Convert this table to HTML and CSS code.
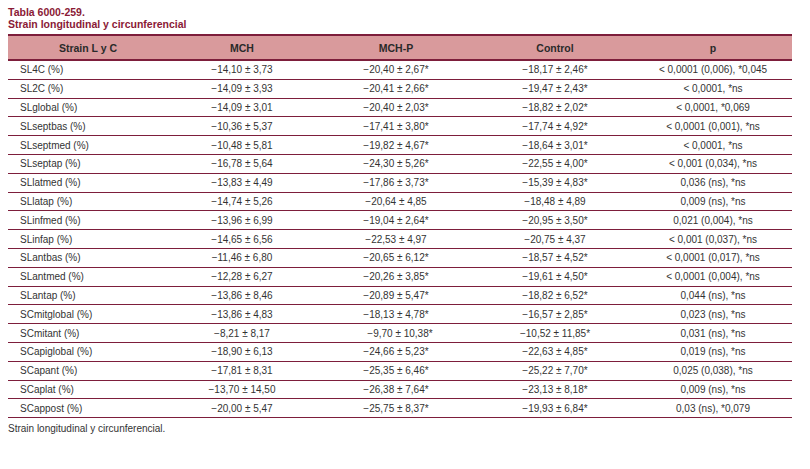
FILE: index.html
```html
<!DOCTYPE html>
<html lang="es">
<head>
<meta charset="utf-8">
<title>Tabla 6000-259</title>
<link rel="stylesheet" href="styles.css">
</head>
<body>
<div class="page">
  <div class="caption">
    <div>Tabla 6000-259.</div>
    <div>Strain longitudinal y circunferencial</div>
  </div>
  <table class="data">
    <colgroup>
      <col class="c1"><col class="c2"><col class="c3"><col class="c4"><col class="c5">
    </colgroup>
    <thead>
      <tr><th>Strain L y C</th><th>MCH</th><th>MCH-P</th><th>Control</th><th>p</th></tr>
    </thead>
    <tbody>
      <tr><td class="name">SL4C (%)</td><td>−14,10 ± 3,73</td><td>−20,40 ± 2,67*</td><td>−18,17 ± 2,46*</td><td>&lt; 0,0001 (0,006), *0,045</td></tr>
      <tr><td class="name">SL2C (%)</td><td>−14,09 ± 3,93</td><td>−20,41 ± 2,66*</td><td>−19,47 ± 2,43*</td><td>&lt; 0,0001, *ns</td></tr>
      <tr><td class="name">SLglobal (%)</td><td>−14,09 ± 3,01</td><td>−20,40 ± 2,03*</td><td>−18,82 ± 2,02*</td><td>&lt; 0,0001, *0,069</td></tr>
      <tr><td class="name">SLseptbas (%)</td><td>−10,36 ± 5,37</td><td>−17,41 ± 3,80*</td><td>−17,74 ± 4,92*</td><td>&lt; 0,0001 (0,001), *ns</td></tr>
      <tr><td class="name">SLseptmed (%)</td><td>−10,48 ± 5,81</td><td>−19,82 ± 4,67*</td><td>−18,64 ± 3,01*</td><td>&lt; 0,0001, *ns</td></tr>
      <tr><td class="name">SLseptap (%)</td><td>−16,78 ± 5,64</td><td>−24,30 ± 5,26*</td><td>−22,55 ± 4,00*</td><td>&lt; 0,001 (0,034), *ns</td></tr>
      <tr><td class="name">SLlatmed (%)</td><td>−13,83 ± 4,49</td><td>−17,86 ± 3,73*</td><td>−15,39 ± 4,83*</td><td>0,036 (ns), *ns</td></tr>
      <tr><td class="name">SLlatap (%)</td><td>−14,74 ± 5,26</td><td>−20,64 ± 4,85</td><td>−18,48 ± 4,89</td><td>0,009 (ns), *ns</td></tr>
      <tr><td class="name">SLinfmed (%)</td><td>−13,96 ± 6,99</td><td>−19,04 ± 2,64*</td><td>−20,95 ± 3,50*</td><td>0,021 (0,004), *ns</td></tr>
      <tr><td class="name">SLinfap (%)</td><td>−14,65 ± 6,56</td><td>−22,53 ± 4,97</td><td>−20,75 ± 4,37</td><td>&lt; 0,001 (0,037), *ns</td></tr>
      <tr><td class="name">SLantbas (%)</td><td>−11,46 ± 6,80</td><td>−20,65 ± 6,12*</td><td>−18,57 ± 4,52*</td><td>&lt; 0,0001 (0,017), *ns</td></tr>
      <tr><td class="name">SLantmed (%)</td><td>−12,28 ± 6,27</td><td>−20,26 ± 3,85*</td><td>−19,61 ± 4,50*</td><td>&lt; 0,0001 (0,004), *ns</td></tr>
      <tr><td class="name">SLantap (%)</td><td>−13,86 ± 8,46</td><td>−20,89 ± 5,47*</td><td>−18,82 ± 6,52*</td><td>0,044 (ns), *ns</td></tr>
      <tr><td class="name">SCmitglobal (%)</td><td>−13,86 ± 4,83</td><td>−18,13 ± 4,78*</td><td>−16,57 ± 2,85*</td><td>0,023 (ns), *ns</td></tr>
      <tr><td class="name">SCmitant (%)</td><td>−8,21 ± 8,17</td><td class="shift">−9,70 ± 10,38*</td><td>−10,52 ± 11,85*</td><td>0,031 (ns), *ns</td></tr>
      <tr><td class="name">SCapiglobal (%)</td><td>−18,90 ± 6,13</td><td>−24,66 ± 5,23*</td><td>−22,63 ± 4,85*</td><td>0,019 (ns), *ns</td></tr>
      <tr><td class="name">SCapant (%)</td><td>−17,81 ± 8,31</td><td>−25,35 ± 6,46*</td><td>−25,22 ± 7,70*</td><td>0,025 (0,038), *ns</td></tr>
      <tr><td class="name">SCaplat (%)</td><td>−13,70 ± 14,50</td><td>−26,38 ± 7,64*</td><td>−23,13 ± 8,18*</td><td>0,009 (ns), *ns</td></tr>
      <tr><td class="name">SCappost (%)</td><td>−20,00 ± 5,47</td><td>−25,75 ± 8,37*</td><td>−19,93 ± 6,84*</td><td>0,03 (ns), *0,079</td></tr>
    </tbody>
  </table>
  <p class="note">Strain longitudinal y circunferencial.</p>
</div>
</body>
</html>
```

FILE: styles.css
```css
html, body {
  margin: 0;
  padding: 0;
  background: #ffffff;
}

body {
  font-family: "Liberation Sans", Arial, sans-serif;
  color: #333333;
  font-size: 10px;
}

.page {
  padding: 7px 18px 0 8px;
}

.caption {
  color: #8a1a36;
  font-weight: bold;
  font-size: 10.5px;
  line-height: 11.5px;
}

.data {
  width: 784px;
  border-collapse: collapse;
  margin-top: 4px;
  table-layout: fixed;
}

.c1 { width: 160px; }
.c2 { width: 148px; }
.c3 { width: 160px; }
.c4 { width: 158px; }
.c5 { width: 158px; }

.data th {
  background: #d99a9c;
  color: #2a2a2a;
  font-weight: bold;
  height: 23px;
  padding: 0;
  border-top: 2px solid #7d1e3b;
  border-bottom: 2px solid #7d1e3b;
  text-align: center;
  font-size: 10.5px;
}

.data td {
  height: 17.8px;
  padding: 0;
  border-bottom: 1px solid #7d1e3b;
  text-align: center;
  white-space: nowrap;
  font-size: 10px;
}

.data td.name {
  text-align: left;
  padding-left: 12px;
}

.data td.shift {
  padding-left: 8px;
}

.note {
  margin: 5px 0 0 0;
  font-size: 10px;
  color: #333333;
}
```
